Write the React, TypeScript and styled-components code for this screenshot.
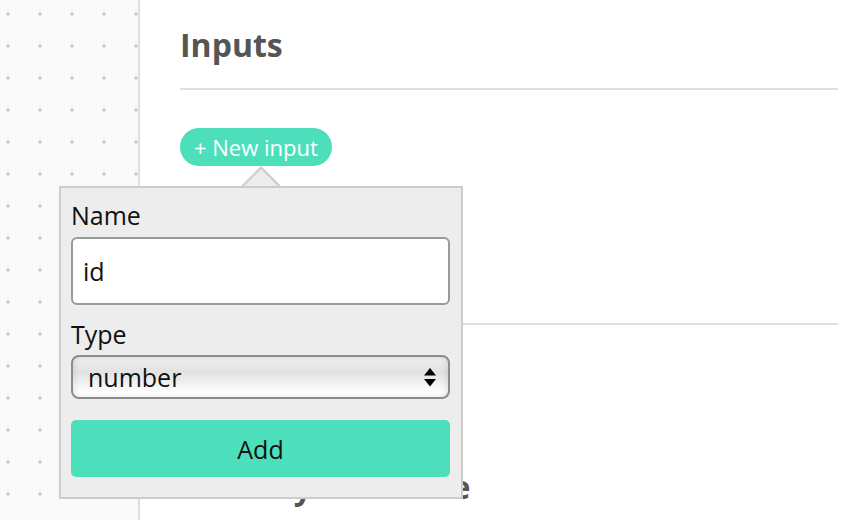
import React from "react";
import styled, { createGlobalStyle } from "styled-components";

const GlobalStyle = createGlobalStyle`
  html, body {
    margin: 0;
    padding: 0;
    height: 520px;
    overflow: hidden;
    background: #ffffff;
  }
  body {
    font-family: "Open Sans", "Noto Sans", sans-serif;
  }
  * { box-sizing: border-box; }
`;

const Page = styled.div`
  display: flex;
  height: 520px;
  width: 868px;
`;

const Sidebar = styled.aside`
  flex: 0 0 140px;
  height: 100%;
  background-color: #f9f9f9;
  background-image: radial-gradient(circle, #c6c6c6 1.4px, transparent 1.9px);
  background-size: 32px 32px;
  background-position: -8px -2px;
  border-right: 2px solid #dedede;
`;

const Main = styled.main`
  flex: 1;
  padding: 23px 30px 0 40px;
  display: flex;
  flex-direction: column;
`;

const Heading = styled.h2<{ $top?: number }>`
  margin: ${(p) => p.$top ?? 0}px 0 0 0;
  font-family: "Open Sans", sans-serif;
  font-weight: 700;
  font-size: 32px;
  line-height: 44px;
  color: #555555;
  white-space: nowrap;
`;

const Divider = styled.hr<{ $top: number }>`
  margin: ${(p) => p.$top}px 0 0 0;
  border: none;
  height: 2px;
  background: #dfdfdf;
  width: 100%;
`;

const ButtonWrap = styled.div`
  position: relative;
  margin-top: 38px;
  align-self: flex-start;
`;

const PillButton = styled.button`
  height: 38px;
  padding: 0 14px;
  border: none;
  border-radius: 19px;
  background: #4ddfbb;
  color: #ffffff;
  font-family: "Open Sans", sans-serif;
  font-size: 22px;
  line-height: 38px;
  cursor: pointer;
  white-space: nowrap;
`;

const Popover = styled.div`
  position: absolute;
  left: -121px;
  top: 58px;
  width: 404px;
  z-index: 10;
  background: #ededed;
  border: 2px solid #cccccc;
  padding: 11px 11px 20px 10px;
  display: flex;
  flex-direction: column;

  &::before,
  &::after {
    content: "";
    position: absolute;
    width: 0;
    height: 0;
    border-style: solid;
    border-color: transparent;
  }
  &::before {
    left: 180px;
    top: -22px;
    border-width: 0 20px 20px 20px;
    border-bottom-color: #cccccc;
  }
  &::after {
    left: 183px;
    top: -19px;
    border-width: 0 17px 17px 17px;
    border-bottom-color: #ececec;
  }
`;

const Label = styled.label<{ $top?: number }>`
  display: block;
  margin-top: ${(p) => p.$top ?? 0}px;
  font-family: "Open Sans", sans-serif;
  font-size: 25px;
  line-height: 33px;
  color: #111111;
`;

const TextInput = styled.input`
  margin-top: 5px;
  width: 100%;
  height: 68px;
  border: 2px solid #9a9a9a;
  border-radius: 6px;
  background: #ffffff;
  padding: 0 10px;
  font-family: "Open Sans", sans-serif;
  font-size: 25px;
  color: #111111;
  outline: none;
`;

const SelectBox = styled.div`
  margin-top: 4px;
  width: 100%;
  height: 44px;
  border: 2px solid #8c8c8c;
  border-radius: 8px;
  background: linear-gradient(to bottom, #eeeeee 0%, #e2e2e2 40%, #f9f9f9 80%, #ffffff 100%);
  box-shadow: inset -3px 0 4px rgba(0, 0, 0, 0.07), inset 3px 0 4px rgba(0, 0, 0, 0.05);
  display: flex;
  align-items: center;
  justify-content: space-between;
  padding: 0 12px 0 15px;
  font-family: "Open Sans", sans-serif;
  font-size: 25px;
  color: #111111;
`;

const SelectValue = styled.span`
  line-height: 33px;
`;

const AddButton = styled.button`
  margin-top: 21px;
  width: 100%;
  height: 57px;
  border: none;
  border-radius: 5px;
  background: #4ddfbb;
  color: #111111;
  font-family: "Open Sans", sans-serif;
  font-size: 25px;
  cursor: pointer;
`;

const Updown = () => (
  <svg width="12" height="19" viewBox="0 0 12 19" aria-hidden="true">
    <polygon points="6,0 12,7.5 0,7.5" fill="#000" />
    <polygon points="0,11 12,11 6,18.5" fill="#000" />
  </svg>
);

export default function App() {
  return (
    <>
      <GlobalStyle />
      <Page>
        <Sidebar />
        <Main>
          <Heading>Inputs</Heading>
          <Divider $top={21} />
          <ButtonWrap>
            <PillButton type="button">+ New input</PillButton>
            <Popover>
              <Label htmlFor="input-name">Name</Label>
              <TextInput id="input-name" defaultValue="id" />
              <Label $top={13}>Type</Label>
              <SelectBox role="combobox">
                <SelectValue>number</SelectValue>
                <Updown />
              </SelectBox>
              <AddButton type="button">Add</AddButton>
            </Popover>
          </ButtonWrap>
          <Divider $top={157} />
          <Heading $top={140}>Delivery structure</Heading>
        </Main>
      </Page>
    </>
  );
}
